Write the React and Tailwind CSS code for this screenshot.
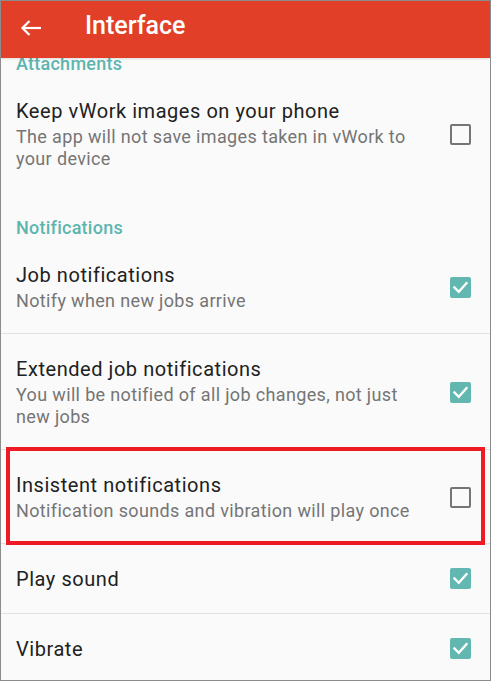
import React from "react";

const font = { fontFamily: "Roboto, 'Noto Sans', sans-serif" };

function Checkbox({ checked }) {
  if (checked) {
    return (
      <div className="w-[21px] h-[21px] rounded-[2px] bg-[#62b7b1] flex items-center justify-center shrink-0">
        <svg width="21" height="21" viewBox="0 0 21 21" fill="none">
          <path d="M4.5 10.5 L8.8 14.8 L16.5 6.2" stroke="white" strokeWidth="2.4" strokeLinecap="square" />
        </svg>
      </div>
    );
  }
  return <div className="w-[21px] h-[21px] rounded-[2px] border-2 border-[#757575] shrink-0" />;
}

function Heading({ children, className = "" }) {
  return (
    <div className={`pl-[15px] text-[18px] leading-[24px] tracking-[0.25px] font-medium text-[#5db5af] ${className}`}>
      {children}
    </div>
  );
}

function Row({ title, sub, checked, divider = true }) {
  return (
    <div className={divider ? "border-b border-[#e2e2e2]" : ""}>
      <div className={`flex items-center pl-[15px] pr-[19px] ${sub ? "pt-[22px] pb-[21px]" : "h-[69px]"}`}>
        <div className="w-[405px]">
          <div className="text-[20px] leading-[26px] tracking-[0.55px] text-[#212121]">{title}</div>
          {sub && (
            <div className="mt-[2px] text-[18px] leading-[22px] tracking-[0.35px] text-[#757575]">{sub}</div>
          )}
        </div>
        <div className="ml-auto">
          <Checkbox checked={checked} />
        </div>
      </div>
    </div>
  );
}

export default function App() {
  return (
    <div className="w-[493px] h-[685px] bg-white" style={font}>
      <div className="w-[491px] h-[681px] border border-[#8c8c8c] bg-[#fafafa] flex flex-col overflow-hidden">
        <div className="relative z-10 h-[57px] bg-[#e13f27] flex items-start shrink-0 shadow-[0_1px_2px_rgba(0,0,0,0.12)]">
          <svg className="mt-[18px] ml-[19px]" width="22" height="18" viewBox="0 0 22 18" fill="none">
            <path d="M2.5 9 H21" stroke="white" strokeWidth="2.2" />
            <path d="M9.5 2 L2.5 9 L9.5 16" stroke="white" strokeWidth="2.2" strokeLinejoin="miter" />
          </svg>
          <div className="ml-[43px] pt-[10px] text-[25px] leading-[30px] font-medium text-white">Interface</div>
        </div>

        <div className="flex-1 overflow-hidden">
          <Heading className="-mt-[6px]">Attachments</Heading>
          <Row
            title="Keep vWork images on your phone"
            sub="The app will not save images taken in vWork to your device"
            checked={false}
            divider={false}
          />
          <Heading className="pt-[25px]">Notifications</Heading>
          <Row title="Job notifications" sub="Notify when new jobs arrive" checked />
          <Row
            title="Extended job notifications"
            sub="You will be notified of all job changes, not just new jobs"
            checked
          />
          <div className="relative">
            <Row
              title="Insistent notifications"
              sub="Notification sounds and vibration will play once"
              checked={false}
            />
            <span className="absolute left-[5px] right-[5px] -top-[3px] -bottom-[1px] border-4 border-[#ed1c24] pointer-events-none" />
          </div>
          <Row title="Play sound" checked />
          <Row title="Vibrate" checked />
        </div>
      </div>
    </div>
  );
}
